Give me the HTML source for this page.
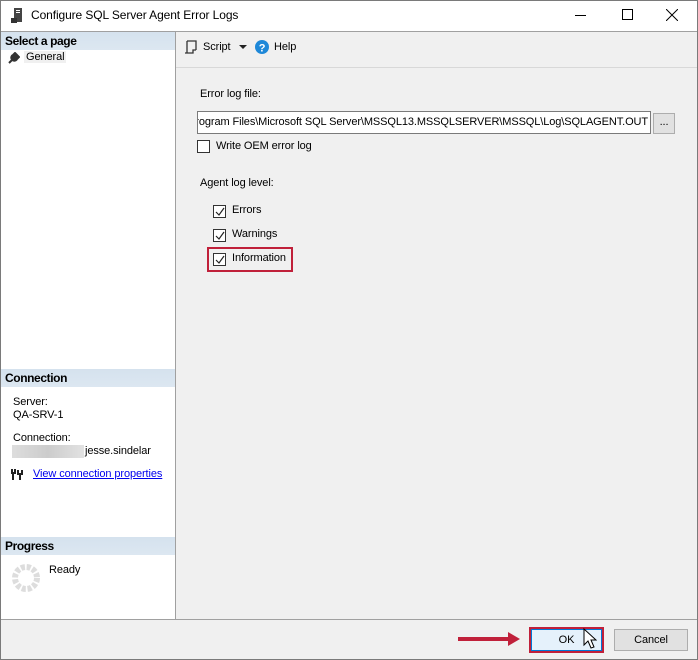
<!DOCTYPE html>
<html><head><style>
*{margin:0;padding:0;box-sizing:border-box}
body{width:698px;height:660px;background:#fff;font-family:"Liberation Sans",sans-serif;font-size:11px;letter-spacing:-0.1px;color:#000;position:relative;overflow:hidden}
.a{position:absolute}
.win{left:0;top:0;width:698px;height:660px;border:1px solid #7a7a7a}
.hdr{background:linear-gradient(#d5e2ee,#dce7f1);font-weight:bold;height:18px;line-height:18px;padding-left:4px;font-size:12px;letter-spacing:-0.4px;left:1px;width:174px}
.cb{width:13px;height:13px;border:1px solid #333;background:#fff}
.cb svg{position:absolute;left:1px;top:1px}
</style></head><body>
<div class="a win"></div>
<svg class="a" style="left:11px;top:8px" width="14" height="16"><rect x="3" y="0" width="8" height="14" fill="#444"/><rect x="5" y="2" width="4" height="1" fill="#fff"/><rect x="5" y="4" width="4" height="1" fill="#fff"/><rect x="0" y="10" width="6" height="5" fill="#333"/></svg>
<div class="a" style="left:31px;top:8px;font-size:12px">Configure SQL Server Agent Error Logs</div>
<div class="a" style="left:575px;top:15px;width:11px;height:1px;background:#000"></div>
<div class="a" style="left:622px;top:9px;width:11px;height:11px;border:1px solid #000"></div>
<svg class="a" style="left:666px;top:9px" width="12" height="12"><path d="M0 0L12 12M12 0L0 12" stroke="#000"/></svg>
<div class="a" style="left:1px;top:31px;width:175px;height:588px;background:#fff;border-right:1px solid #a0a0a0;border-top:1px solid #a0a0a0"></div>
<div class="a hdr" style="top:32px">Select a page</div>
<svg class="a" style="left:8px;top:52px" width="12" height="12"><path d="M1 11L6 6M5 3a3 3 0 1 0 4 4L11 5 8 2 7 1z" stroke="#333" stroke-width="2" fill="#333"/></svg>
<div class="a" style="left:24px;top:51px;background:#f0f0f0;padding:0 2px">General</div>
<div class="a hdr" style="top:369px">Connection</div>
<div class="a" style="left:13px;top:396px">Server:</div>
<div class="a" style="left:13px;top:409px">QA-SRV-1</div>
<div class="a" style="left:13px;top:432px">Connection:</div>
<div class="a" style="left:12px;top:445px;width:72px;height:13px;background:linear-gradient(90deg,#ddd,#ccc,#e2e2e2)"></div>
<div class="a" style="left:85px;top:445px">jesse.sindelar</div>
<svg class="a" style="left:11px;top:468px" width="12" height="12"><path d="M1 1v4h3V1M2 5v7M7 2v4h4V2M9 6v6" stroke="#222" stroke-width="2" fill="none"/></svg>
<div class="a" style="left:33px;top:468px;color:#0000ee;text-decoration:underline">View connection properties</div>
<div class="a hdr" style="top:537px">Progress</div>
<svg class="a" style="left:11px;top:563px" width="30" height="30"><circle cx="15" cy="15" r="11" stroke="#ddd" stroke-width="6" fill="none" stroke-dasharray="4 1.8"/></svg>
<div class="a" style="left:49px;top:564px">Ready</div>
<div class="a" style="left:176px;top:31px;width:521px;height:588px;background:#f0f0f0;border-top:1px solid #a0a0a0"></div>
<div class="a" style="left:176px;top:67px;width:521px;height:1px;background:#d8d8d8"></div>
<svg class="a" style="left:184px;top:40px" width="13" height="14"><path d="M3 1h9v9M3 1v12H1M3 13h6v-3h3" stroke="#333" fill="none" stroke-width="1.3"/></svg>
<div class="a" style="left:203px;top:41px">Script</div>
<svg class="a" style="left:239px;top:45px" width="8" height="5"><path d="M0 0h8L4 4z" fill="#222"/></svg>
<svg class="a" style="left:255px;top:40px" width="14" height="14"><circle cx="7" cy="7" r="7" fill="#1e88d8"/><text x="7" y="11.5" font-size="11" font-weight="bold" fill="#fff" text-anchor="middle" font-family="Liberation Sans">?</text></svg>
<div class="a" style="left:274px;top:41px">Help</div>
<div class="a" style="left:200px;top:88px">Error log file:</div>
<div class="a" style="left:197px;top:111px;width:454px;height:23px;border:1px solid #7a7a7a;background:#fff;overflow:hidden;white-space:nowrap;line-height:20px;direction:rtl;padding-right:2px"><span style="direction:ltr;unicode-bidi:embed">C:\Program Files\Microsoft SQL Server\MSSQL13.MSSQLSERVER\MSSQL\Log\SQLAGENT.OUT</span></div>
<div class="a" style="left:653px;top:113px;width:22px;height:21px;border:1px solid #adadad;background:#e1e1e1;text-align:center;line-height:17px">...</div>
<div class="a cb" style="left:197px;top:140px"></div>
<div class="a" style="left:216px;top:140px">Write OEM error log</div>
<div class="a" style="left:200px;top:177px">Agent log level:</div>
<div class="a cb" style="left:213px;top:205px"><svg width="10" height="10"><path d="M1 5l3 3 5-7" stroke="#222" fill="none" stroke-width="1.2"/></svg></div>
<div class="a" style="left:232px;top:204px">Errors</div>
<div class="a cb" style="left:213px;top:229px"><svg width="10" height="10"><path d="M1 5l3 3 5-7" stroke="#222" fill="none" stroke-width="1.2"/></svg></div>
<div class="a" style="left:232px;top:228px">Warnings</div>
<div class="a cb" style="left:213px;top:253px"><svg width="10" height="10"><path d="M1 5l3 3 5-7" stroke="#222" fill="none" stroke-width="1.2"/></svg></div>
<div class="a" style="left:232px;top:252px">Information</div>
<div class="a" style="left:207px;top:247px;width:86px;height:25px;border:2px solid #c0203a"></div>
<div class="a" style="left:1px;top:619px;width:696px;height:40px;background:#f0f0f0;border-top:1px solid #a0a0a0"></div>
<svg class="a" style="left:458px;top:631px" width="68" height="16"><path d="M0 8h52" stroke="#c0203a" stroke-width="4"/><path d="M50 1l12 7-12 7z" fill="#c0203a"/></svg>
<div class="a" style="left:529px;top:627px;width:75px;height:26px;border:2px solid #c0203a"></div>
<div class="a" style="left:531px;top:629px;width:71px;height:22px;background:#e5f1fb;border:1px solid #0078d7;text-align:center;line-height:20px">OK</div>
<svg class="a" style="left:583px;top:628px" width="14" height="22"><path d="M1 1v16l4-4 3 7 3-1-3-7h5z" fill="#fff" stroke="#000"/></svg>
<div class="a" style="left:614px;top:629px;width:74px;height:22px;background:#e1e1e1;border:1px solid #adadad;text-align:center;line-height:20px">Cancel</div>
</body></html>
